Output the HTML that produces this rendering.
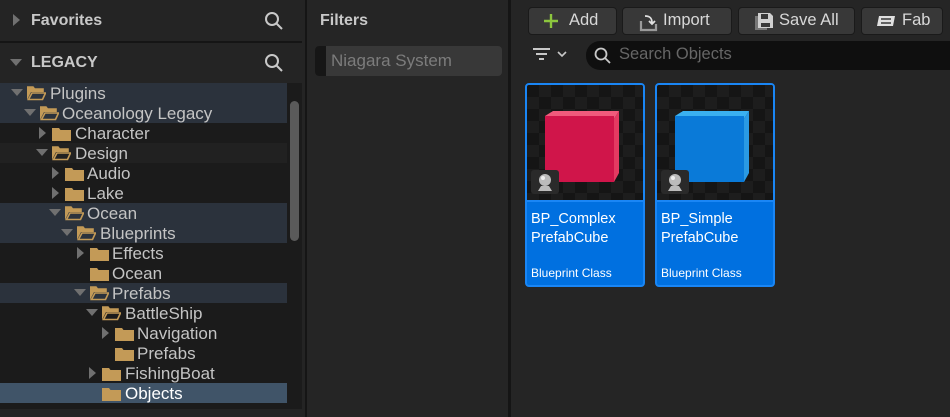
<!DOCTYPE html>
<html><head><style>
*{margin:0;padding:0;box-sizing:border-box}
body{width:950px;height:417px;background:#242424;font-family:"Liberation Sans",sans-serif;position:relative;overflow:hidden;color:#c0c0c0}
.abs{position:absolute}
.hdr{position:absolute;left:0;width:302px;height:41px;font-weight:bold;font-size:16px;color:#c8c8c8}
.hdr span{position:absolute;left:31px;top:12px}
.tree{position:absolute;left:0;top:83px;width:302px;height:326px;background:#1b1b1b}
.row{position:absolute;left:0;width:287px;height:20px;font-size:17px;color:#c4c4c4}
.row .t{position:absolute;top:1px;white-space:nowrap}
.hl{background:#2b323c}
.dz{background:#212121}
.sel{background:#405468;color:#fff}
.arr{position:absolute;top:6px;width:0;height:0}
.ad{border-left:6px solid transparent;border-right:6px solid transparent;border-top:7px solid #707070}
.ar{border-top:6px solid transparent;border-bottom:6px solid transparent;border-left:7px solid #707070;top:4px}
.fold{position:absolute;top:3px;width:19px;height:15px}
.btn{position:absolute;top:7px;height:28px;background:#383838;border:1px solid #1a1a1a;border-radius:4px;color:#d8d8d8;font-size:16.5px}
.card{position:absolute;top:83px;width:120px;height:204px;background:#0070e0;border:2px solid #1a86f5;border-radius:4px;overflow:hidden}
.thumb{position:absolute;left:0;top:0;width:116px;height:117px;background-color:#151515;background-image:linear-gradient(45deg,#1d1d1d 25%,transparent 25%,transparent 75%,#1d1d1d 75%),linear-gradient(45deg,#1d1d1d 25%,transparent 25%,transparent 75%,#1d1d1d 75%);background-size:24px 24px;background-position:0 0,12px 12px;border-bottom:2px solid #1a86f5}
.cn{position:absolute;left:4px;top:125px;color:#fff;font-size:14.5px;line-height:19px}
.cc{position:absolute;left:4px;top:181px;color:#fff;font-size:12px}
</style></head><body>
<div class="hdr" style="top:0"><div class="arr ar" style="left:13px;top:14px"></div><span>Favorites</span>
<svg class="abs" style="left:264px;top:11px" width="20" height="20" viewBox="0 0 20 20"><circle cx="8" cy="8" r="6" fill="none" stroke="#c8c8c8" stroke-width="2"/><line x1="12.5" y1="12.5" x2="18" y2="18" stroke="#c8c8c8" stroke-width="2"/></svg></div>
<div class="abs" style="left:0;top:41px;width:302px;height:2px;background:#151515"></div>
<div class="hdr" style="top:42px"><div class="arr ad" style="left:10px;top:17px"></div><span>LEGACY</span>
<svg class="abs" style="left:264px;top:11px" width="20" height="20" viewBox="0 0 20 20"><circle cx="8" cy="8" r="6" fill="none" stroke="#c8c8c8" stroke-width="2"/><line x1="12.5" y1="12.5" x2="18" y2="18" stroke="#c8c8c8" stroke-width="2"/></svg></div>
<div class="tree">
<svg width="0" height="0" style="position:absolute"><defs>
<symbol id="fc" viewBox="0 0 19 15"><path d="M0 2h7l1.5 2H19v11H0z" fill="#c39a57"/></symbol>
<symbol id="fo" viewBox="0 0 19 15"><path d="M0 1h6l1.5 2H16v3H4L0 14z" fill="#c39a57"/><path d="M1.5 13.5L5 7h13.5L15.5 13.5z" fill="none" stroke="#c39a57" stroke-width="1.6"/><path d="M0 1h6l1.5 2H16v3" fill="none" stroke="#c39a57" stroke-width="1.6"/></symbol>
</defs></svg>
<div class="row hl" style="top:0"><div class="arr ad" style="left:11px"></div><svg class="fold" style="left:27px"><use href="#fo"/></svg><span class="t" style="left:50px">Plugins</span></div>
<div class="row hl" style="top:20px"><div class="arr ad" style="left:24px"></div><svg class="fold" style="left:40px"><use href="#fo"/></svg><span class="t" style="left:62px">Oceanology Legacy</span></div>
<div class="row" style="top:40px"><div class="arr ar" style="left:39px"></div><svg class="fold" style="left:52px"><use href="#fc"/></svg><span class="t" style="left:75px">Character</span></div>
<div class="row dz" style="top:60px"><div class="arr ad" style="left:36px"></div><svg class="fold" style="left:52px"><use href="#fo"/></svg><span class="t" style="left:75px">Design</span></div>
<div class="row" style="top:80px"><div class="arr ar" style="left:52px"></div><svg class="fold" style="left:65px"><use href="#fc"/></svg><span class="t" style="left:87px">Audio</span></div>
<div class="row" style="top:100px"><div class="arr ar" style="left:52px"></div><svg class="fold" style="left:65px"><use href="#fc"/></svg><span class="t" style="left:87px">Lake</span></div>
<div class="row hl" style="top:120px"><div class="arr ad" style="left:49px"></div><svg class="fold" style="left:65px"><use href="#fo"/></svg><span class="t" style="left:87px">Ocean</span></div>
<div class="row hl" style="top:140px"><div class="arr ad" style="left:61px"></div><svg class="fold" style="left:77px"><use href="#fo"/></svg><span class="t" style="left:100px">Blueprints</span></div>
<div class="row" style="top:160px"><div class="arr ar" style="left:77px"></div><svg class="fold" style="left:90px"><use href="#fc"/></svg><span class="t" style="left:112px">Effects</span></div>
<div class="row" style="top:180px"><svg class="fold" style="left:90px"><use href="#fc"/></svg><span class="t" style="left:112px">Ocean</span></div>
<div class="row hl" style="top:200px"><div class="arr ad" style="left:74px"></div><svg class="fold" style="left:90px"><use href="#fo"/></svg><span class="t" style="left:112px">Prefabs</span></div>
<div class="row" style="top:220px"><div class="arr ad" style="left:86px"></div><svg class="fold" style="left:102px"><use href="#fo"/></svg><span class="t" style="left:125px">BattleShip</span></div>
<div class="row" style="top:240px"><div class="arr ar" style="left:102px"></div><svg class="fold" style="left:115px"><use href="#fc"/></svg><span class="t" style="left:137px">Navigation</span></div>
<div class="row" style="top:260px"><svg class="fold" style="left:115px"><use href="#fc"/></svg><span class="t" style="left:137px">Prefabs</span></div>
<div class="row" style="top:280px"><div class="arr ar" style="left:89px"></div><svg class="fold" style="left:102px"><use href="#fc"/></svg><span class="t" style="left:125px">FishingBoat</span></div>
<div class="row sel" style="top:300px"><svg class="fold" style="left:102px"><use href="#fc"/></svg><span class="t" style="left:125px;color:#fff">Objects</span></div>
<div class="abs" style="left:290px;top:18px;width:9px;height:140px;background:#5a5a5a;border-radius:5px"></div>
</div>
<div class="abs" style="left:305px;top:0;width:2px;height:417px;background:#151515"></div>
<div class="abs" style="left:307px;top:0;width:201px;height:417px;background:#252525"></div>
<div class="abs" style="left:508px;top:0;width:3px;height:417px;background:#151515"></div>
<div class="abs" style="left:511px;top:0;width:439px;height:417px;background:#252525"></div>
<div class="abs" style="left:320px;top:12px;font-weight:bold;font-size:16px;color:#c8c8c8">Filters</div>
<div class="abs" style="left:315px;top:46px;width:187px;height:30px;background:#383838;border-radius:4px;overflow:hidden"><div class="abs" style="left:0;top:0;width:11px;height:30px;background:#161616"></div><span class="abs" style="left:16px;top:5px;font-size:17px;color:#7c7c7c">Niagara System</span></div>
<div class="btn" style="left:528px;width:89px"><svg class="abs" style="left:14px;top:5px" width="16" height="16"><path d="M8 1v14M1 8h14" stroke="#8cc63e" stroke-width="2.4"/></svg><span class="abs" style="left:40px;top:3px">Add</span></div>
<div class="btn" style="left:622px;width:110px"><svg class="abs" style="left:16px;top:4px" width="20" height="20" viewBox="0 0 20 20"><path d="M2 9v9h15v-6" fill="none" stroke="#9a9a9a" stroke-width="2.2"/><path d="M6 4c5 0 7 2 7 7M10 9l3 3 3-3" fill="none" stroke="#e0e0e0" stroke-width="1.8"/></svg><span class="abs" style="left:40px;top:3px">Import</span></div>
<div class="btn" style="left:738px;width:117px"><svg class="abs" style="left:16px;top:5px" width="18" height="18" viewBox="0 0 18 18"><rect x="0" y="3" width="12" height="14" fill="#777"/><path d="M3 0h12l3 3v12H3z" fill="#d0d0d0"/><rect x="6" y="1" width="7" height="5" fill="#383838"/><rect x="6" y="10" width="9" height="4" fill="#383838"/></svg><span class="abs" style="left:40px;top:3px">Save All</span></div>
<div class="btn" style="left:861px;width:82px"><svg class="abs" style="left:14px;top:7px" width="20" height="12" viewBox="0 0 20 12"><path d="M3 1h16l-2 10H1z" fill="#e0e0e0"/><path d="M5 4h10M5 8h10" stroke="#383838" stroke-width="1.5"/></svg><span class="abs" style="left:40px;top:3px">Fab</span></div>
<svg class="abs" style="left:532px;top:46px" width="40" height="18" viewBox="0 0 40 18"><path d="M1 3h17M4 8h11M7 13h5" stroke="#c8c8c8" stroke-width="2"/><path d="M26 6l4 4 4-4" fill="none" stroke="#c8c8c8" stroke-width="1.6"/></svg>
<div class="abs" style="left:586px;top:41px;width:380px;height:29px;background:#0f0f0f;border-radius:14px"><svg class="abs" style="left:8px;top:6px" width="18" height="18" viewBox="0 0 18 18"><circle cx="7" cy="7" r="5.5" fill="none" stroke="#c8c8c8" stroke-width="1.8"/><line x1="11" y1="11" x2="16" y2="16" stroke="#c8c8c8" stroke-width="1.8"/></svg><span class="abs" style="left:33px;top:4px;font-size:16.5px;color:#666">Search Objects</span></div>
<div class="card" style="left:525px"><div class="thumb">
<svg class="abs" style="left:14px;top:25px" width="82" height="80" viewBox="0 0 82 80"><path d="M4 6L12 1h66l-5 8z" fill="#f05a7c"/><path d="M73 9l5-8v62l-5 9z" fill="#e43a62"/><path d="M4 6h69v66H4z" fill="#d0154a"/></svg>
<div class="abs" style="left:4px;top:85px;width:28px;height:24px;background:#2a2a2a;border-radius:3px"><svg width="28" height="24" viewBox="0 0 28 24"><circle cx="14" cy="10" r="6" fill="#bbb"/><circle cx="12" cy="8" r="2" fill="#eee"/><path d="M7 21l3-5h8l3 5z" fill="#bbb"/></svg></div></div>
<div class="cn">BP_Complex<br>PrefabCube</div><div class="cc">Blueprint Class</div></div>
<div class="card" style="left:655px"><div class="thumb">
<svg class="abs" style="left:14px;top:25px" width="82" height="80" viewBox="0 0 82 80"><path d="M4 6L12 1h66l-5 8z" fill="#3ab0f0"/><path d="M73 9l5-8v62l-5 9z" fill="#2a9ae4"/><path d="M4 6h69v66H4z" fill="#0a7ad8"/></svg>
<div class="abs" style="left:4px;top:85px;width:28px;height:24px;background:#2a2a2a;border-radius:3px"><svg width="28" height="24" viewBox="0 0 28 24"><circle cx="14" cy="10" r="6" fill="#bbb"/><circle cx="12" cy="8" r="2" fill="#eee"/><path d="M7 21l3-5h8l3 5z" fill="#bbb"/></svg></div></div>
<div class="cn">BP_Simple<br>PrefabCube</div><div class="cc">Blueprint Class</div></div>
</body></html>
